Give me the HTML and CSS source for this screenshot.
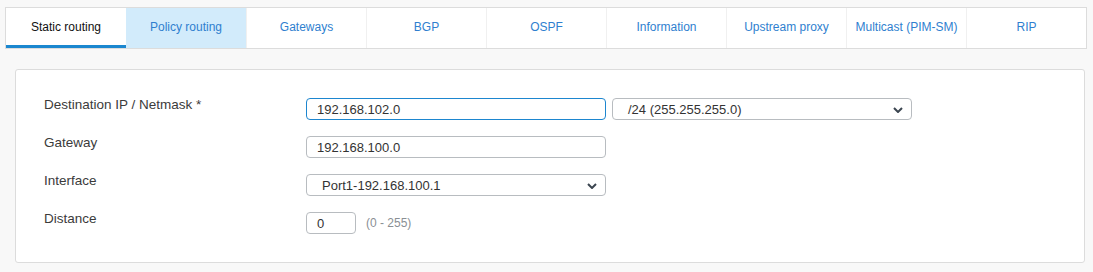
FILE: index.html
```html
<!DOCTYPE html>
<html>
<head>
<meta charset="utf-8">
<link rel="stylesheet" href="styles.css">
</head>
<body>
<div class="page">
  <nav class="tabs">
    <div class="tab active">Static routing</div>
    <div class="tab hover">Policy routing</div>
    <div class="tab">Gateways</div>
    <div class="tab">BGP</div>
    <div class="tab">OSPF</div>
    <div class="tab">Information</div>
    <div class="tab">Upstream proxy</div>
    <div class="tab">Multicast (PIM-SM)</div>
    <div class="tab">RIP</div>
  </nav>
  <section class="panel">
    <div class="row">
      <div class="label">Destination IP / Netmask *</div>
      <div class="fields">
        <div class="input wide focus">192.168.102.0</div>
        <div class="select wide mask">/24 (255.255.255.0)<svg class="chev" viewBox="0 0 10 6"><path d="M1 1l4 4 4-4"/></svg></div>
      </div>
    </div>
    <div class="row">
      <div class="label">Gateway</div>
      <div class="fields">
        <div class="input wide">192.168.100.0</div>
      </div>
    </div>
    <div class="row">
      <div class="label">Interface</div>
      <div class="fields">
        <div class="select wide">Port1-192.168.100.1<svg class="chev" viewBox="0 0 10 6"><path d="M1 1l4 4 4-4"/></svg></div>
      </div>
    </div>
    <div class="row">
      <div class="label">Distance</div>
      <div class="fields">
        <div class="input small">0</div>
        <div class="hint">(0 - 255)</div>
      </div>
    </div>
  </section>
</div>
</body>
</html>
```
FILE: styles.css
```css
* { box-sizing: border-box; }
html, body { margin: 0; padding: 0; }
body {
  background: #f8f8f8;
  font-family: "Liberation Sans", Arial, sans-serif;
  color: #333;
  width: 1093px;
  height: 272px;
  overflow: hidden;
}
.page {
  padding: 7px 6px 0 5px;
}
.tabs {
  display: flex;
  background: #fff;
  border: 1px solid #dcdcdc;
  height: 42px;
  width: 1082px;
}
.tab {
  width: 120px;
  flex: none;
  display: flex;
  align-items: center;
  justify-content: center;
  font-size: 12px;
  color: #2f7fcf;
  border-left: 1px solid #f0f0f0;
  padding-bottom: 3px;
}
.tab:first-child { border-left: none; }
.tab.active {
  color: #111;
  border-bottom: 3px solid #1b87cf;
  padding-bottom: 0;
}
.tab.hover {
  background: #d2ebfb;
  border-left: none;
}
.panel {
  margin: 20px 2px 0 10px;
  background: #fff;
  border: 1px solid #dcdcdc;
  border-radius: 3px;
  height: 194px;
  padding: 28px 0 0 28px;
  display: flex;
  flex-direction: column;
  gap: 16px;
}
.row {
  display: flex;
  align-items: flex-start;
  height: 22px;
}
.label {
  width: 262px;
  font-size: 13.5px;
  color: #3b3b3b;
  line-height: 15px;
  margin-top: -1px;
}
.fields {
  display: flex;
  align-items: center;
  gap: 6px;
}
.input, .select {
  height: 22px;
  border: 1px solid #b8bcc0;
  border-radius: 4px;
  font-size: 13px;
  color: #333;
  display: flex;
  align-items: center;
  padding-left: 10px;
  position: relative;
}
.wide { width: 300px; }
.select { padding-left: 15px; }
.focus { border-color: #1d86cf; }
.small { width: 50px; }
.hint {
  font-size: 12px;
  color: #8a8f94;
  margin-left: 4px;
}
.chev {
  position: absolute;
  right: 8px;
  top: 8px;
  width: 10px;
  height: 6px;
  fill: none;
  stroke: #3b4550;
  stroke-width: 2;
}
```
